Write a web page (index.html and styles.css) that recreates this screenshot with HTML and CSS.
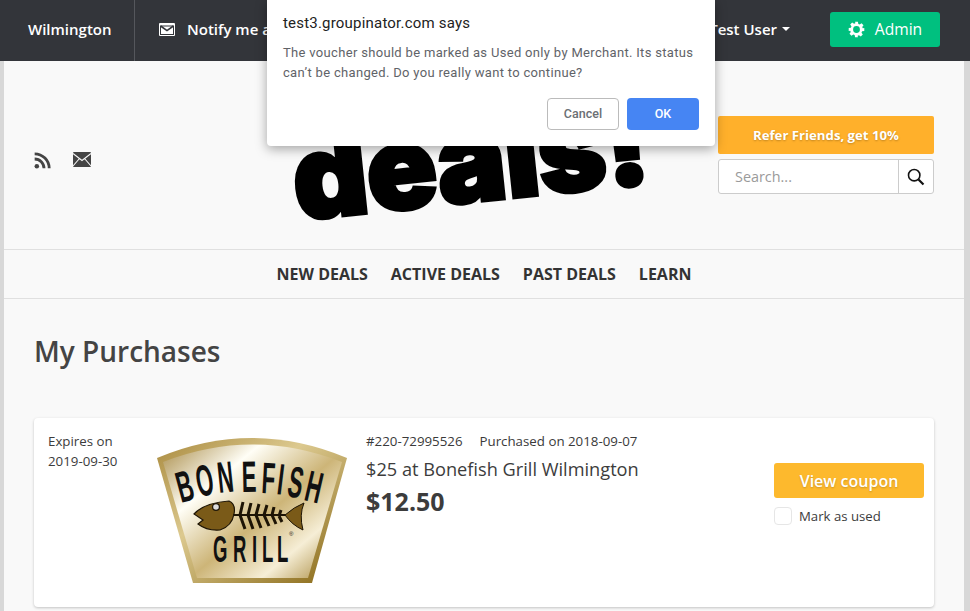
FILE: index.html
```html
<!DOCTYPE html>
<html lang="en">
<head>
<meta charset="utf-8">
<title>My Purchases</title>
<link rel="stylesheet" href="styles.css">
</head>
<body>
<div class="topbar">
  <div class="city">Wilmington</div>
  <div class="notify">
    <svg class="notify-icon" viewBox="0 0 16 13"><rect width="16" height="13" rx="1" fill="#fff"/><path d="M1.6 3 8 7.6 14.4 3" fill="none" stroke="#33353a" stroke-width="1.6"/><rect x="1.5" y="3" width="13" height="8.5" fill="none" stroke="#33353a" stroke-width="1"/></svg>
    <span>Notify me about deals</span>
  </div>
  <div class="user">Test User<i class="caret"></i></div>
  <button class="admin">
    <svg class="gear" viewBox="0 0 24 24"><path fill="#fff" fill-rule="evenodd" d="M10 1h4l.6 3.1 1.9.8 2.6-1.8 2.8 2.8-1.8 2.6.8 1.9L23 10v4l-3.1.6-.8 1.9 1.8 2.6-2.8 2.8-2.6-1.8-1.9.8L14 23h-4l-.6-3.1-1.9-.8-2.6 1.8-2.8-2.8 1.8-2.6-.8-1.9L1 14v-4l3.1-.6.8-1.9-1.8-2.6 2.8-2.8 2.6 1.8 1.9-.8zM12 7.2a4.8 4.8 0 1 0 0 9.6 4.8 4.8 0 0 0 0-9.6z"/></svg>
    <span class="admin-label">Admin</span>
  </button>
</div>

<div class="page">
  <header class="masthead">
    <div class="social">
      <svg class="rss" viewBox="0 0 18 18"><circle cx="3" cy="15" r="2.4" fill="#444"/><path d="M.7 7.4a9.9 9.9 0 0 1 9.9 9.9M.7 1.9a15.4 15.4 0 0 1 15.4 15.4" fill="none" stroke="#444" stroke-width="3"/></svg>
      <svg class="mail" viewBox="0 0 18 15"><rect width="18" height="15" rx="1" fill="#444"/><path d="M0 1.5 9 8.5 18 1.5M0 14l6.5-7.5M18 14l-6.5-7.5" fill="none" stroke="#f9f9f9" stroke-width="1.1"/></svg>
    </div>
    <div class="logo"><span class="logo-text">deals!</span></div>
    <div class="tools">
      <a class="refer">Refer Friends, get 10%</a>
      <div class="search">
        <span class="search-input">Search...</span>
        <span class="search-btn">
          <svg viewBox="0 0 18 18"><circle cx="7.2" cy="7.2" r="5.7" fill="none" stroke="#111" stroke-width="1.6"/><path d="M11.5 11.5 16.5 16.5" stroke="#111" stroke-width="2.2"/></svg>
        </span>
      </div>
    </div>
  </header>

  <nav class="mainnav">
    <a>NEW DEALS</a><a>ACTIVE DEALS</a><a>PAST DEALS</a><a>LEARN</a>
  </nav>

  <main class="content">
    <h1>My Purchases</h1>
    <article class="card">
      <div class="expires">Expires on<br>2019-09-30</div>
      <svg class="brand" viewBox="0 0 190 146">
        <defs>
          <linearGradient id="gold" x1="0" y1="0" x2="1" y2=".9">
            <stop offset="0" stop-color="#a98c48"/><stop offset=".3" stop-color="#fffef6"/><stop offset=".58" stop-color="#cdb578"/><stop offset=".8" stop-color="#f6eed6"/><stop offset="1" stop-color="#b1954f"/>
          </linearGradient>
          <linearGradient id="rim" x1="0" y1="0" x2="1" y2="1">
            <stop offset="0" stop-color="#a98a3e"/><stop offset=".4" stop-color="#dcc98f"/><stop offset="1" stop-color="#866613"/>
          </linearGradient>
        </defs>
        <path d="M0 21Q95-19 190 21L155 146H36Z" fill="url(#rim)"/>
        <path d="M6 25Q95-10 185 25L151 141H40Z" fill="url(#gold)"/>
        <g class="brand-big">
          <text transform="translate(24 66) rotate(-15) scale(.5 1)">B</text>
          <text transform="translate(42 60) rotate(-11) scale(.5 1)">O</text>
          <text transform="translate(62 56) rotate(-6) scale(.5 1)">N</text>
          <text transform="translate(85 55) rotate(-1) scale(.5 1)">E</text>
          <text transform="translate(104 56) rotate(3) scale(.5 1)">F</text>
          <text transform="translate(119 57) rotate(7) scale(.5 1)">I</text>
          <text transform="translate(129 59) rotate(10) scale(.5 1)">S</text>
          <text transform="translate(146 63) rotate(13) scale(.5 1)">H</text>
        </g>
        <g class="brand-small">
          <text transform="translate(56 125) scale(.5 1)">G</text>
          <text transform="translate(76 125) scale(.5 1)">R</text>
          <text transform="translate(95 125) scale(.5 1)">I</text>
          <text transform="translate(105 125) scale(.5 1)">L</text>
          <text transform="translate(120 125) scale(.5 1)">L</text>
        </g>
        <path d="M37 77Q47 66 72 64Q79 67 77 77Q75 89 63 93Q50 94 41 87L46 83Z" fill="#7a5a18" stroke="#1d1405" stroke-width="1.2"/>
        <circle cx="59" cy="70" r="3.4" fill="#ddd" stroke="#1d1405" stroke-width="1.2"/>
        <path d="M76 78H131" stroke="#1d1405" stroke-width="2"/>
        <path d="M83 78 86 65M83 78 88 92M91 78 94 66M91 78 96 92M99 78 102 67M99 78 104 91M107 78 110 68M107 78 112 89M115 78 117 70M115 78 119 87M122 79 124 73M122 79 125 85" stroke="#1d1405" stroke-width="3" fill="none"/>
        <path d="M128 78Q137 70 147 66Q142 78 146 93Q135 88 128 78Z" fill="#7a5a18" stroke="#1d1405" stroke-width="1"/>
        <text class="brand-r" x="132" y="99">®</text>
      </svg>
      <div class="deal">
        <div class="meta"><span>#220-72995526</span><span>Purchased on 2018-09-07</span></div>
        <div class="deal-title">$25 at Bonefish Grill Wilmington</div>
        <div class="price">$12.50</div>
      </div>
      <div class="actions">
        <button class="coupon">View coupon</button>
        <label class="used"><i class="check"></i>Mark as used</label>
      </div>
    </article>
  </main>
</div>

<div class="dialog" role="dialog">
  <div class="dialog-title">test3.groupinator.com says</div>
  <p class="dialog-text">The voucher should be marked as Used only by Merchant. Its status can’t be changed. Do you really want to continue?</p>
  <div class="dialog-actions">
    <button class="btn-cancel">Cancel</button>
    <button class="btn-ok">OK</button>
  </div>
</div>
</body>
</html>
```

FILE: styles.css
```css
* { box-sizing: border-box; }
html, body { margin: 0; height: 611px; overflow: hidden; }
body { background: #d8d8d8; font-family: "Open Sans", sans-serif; color: #3a3a3a; position: relative; }
button { font-family: inherit; border: 0; padding: 0; }

.topbar { height: 61px; background: #33353a; color: #fff; display: flex; align-items: center; font-size: 15px; font-weight: 600; padding: 0 30px 4px 0; }
.city { width: 135px; height: 61px; margin-bottom: -4px; padding-left: 28px; line-height: 59px; border-right: 1px solid #55575c; }
.notify { display: flex; align-items: center; padding-left: 24px; white-space: nowrap; }
.notify-icon { width: 16px; height: 13px; margin: 2px 12px 0 0; }
.user { margin-left: auto; margin-right: 40px; display: flex; align-items: center; }
.caret { width: 0; height: 0; border: 4px solid transparent; border-top-color: #fff; border-bottom: 0; margin-left: 5px; }
.admin { width: 110px; height: 35px; margin-bottom: -2px; background: #00c07f; color: #fff; font-size: 15.6px; font-weight: 400; border-radius: 3px; display: flex; align-items: center; justify-content: center; gap: 10px; }
.admin-label { margin-bottom: 2px; }
.gear { width: 17px; height: 17px; }

.page { margin: 0 6px 0 4px; background: #f9f9f9; height: 550px; overflow: hidden; }
.masthead { height: 189px; border-bottom: 1px solid #e0e0e0; display: flex; padding: 0 30px 0 30px; }
.social { width: 259px; padding-top: 91px; display: flex; gap: 22px; align-items: flex-start; }
.rss { width: 17px; height: 17px; }
.mail { width: 18px; height: 15px; }
.logo { width: 352px; position: relative; }
.logo-text { position: absolute; left: 7px; top: 47px; font-family: "Inter", sans-serif; font-weight: 900; font-size: 116px; line-height: 140px; color: #000; letter-spacing: -1px; -webkit-text-stroke: 4px #000; transform: rotate(-6deg); transform-origin: left bottom; }
.tools { width: 216px; margin-left: auto; padding-top: 55px; }
.refer { display: block; height: 38px; line-height: 38px; background: #ffb02b; color: #fff; text-align: center; font-size: 13.2px; font-weight: 700; border-radius: 2px; text-shadow: 0 1px 2px rgba(0,0,0,.25); }
.search { display: flex; height: 35px; margin-top: 5px; background: #fff; border: 1px solid #ccc; border-radius: 3px; }
.search-input { flex: 1; padding-left: 16px; line-height: 33px; font-size: 14.4px; color: #9a9a9a; }
.search-btn { width: 35px; border-left: 1px solid #ccc; display: flex; align-items: center; justify-content: center; }
.search-btn svg { width: 18px; height: 18px; }

.mainnav { height: 49px; border-bottom: 1px solid #e0e0e0; display: flex; justify-content: center; align-items: center; gap: 23px; font-size: 16px; font-weight: 700; color: #333; }

.content { padding: 0 30px; }
h1 { margin: 0; padding-top: 32px; height: 119px; font-size: 28px; line-height: 40px; font-weight: 600; color: #444; }
.card { display: flex; height: 189px; background: #fff; border-radius: 4px; box-shadow: 0 1px 3px rgba(0,0,0,.22); padding: 13px 10px 0 14px; font-size: 13.3px; line-height: 20px; }
.expires { width: 109px; color: #3c3c3c; }
.brand { width: 190px; height: 146px; margin-top: 6px; flex: none; }
.brand-big text { font-family: "Liberation Sans", sans-serif; font-weight: 700; font-size: 44px; fill: #111; }
.brand-small text { font-family: "Liberation Sans", sans-serif; font-weight: 700; font-size: 37px; fill: #111; }
.brand-r { font-family: "Liberation Sans", sans-serif; font-size: 6px; fill: #111; }
.deal { flex: 1; margin-left: 19px; }
.meta { display: flex; gap: 17px; }
.deal-title { font-size: 18.2px; line-height: 26px; margin-top: 5px; color: #3c3c3c; }
.price { font-size: 25px; line-height: 34px; font-weight: 700; margin-top: 2px; color: #3c3c3c; }
.actions { width: 150px; padding-top: 32px; }
.coupon { display: block; width: 150px; height: 35px; background: #fdb92d; color: #fff; font-size: 16px; font-weight: 600; border-radius: 3px; text-shadow: 0 1px 2px rgba(0,0,0,.2); }
.used { display: flex; align-items: center; margin-top: 8px; font-size: 13.2px; color: #3c3c3c; }
.check { width: 18px; height: 18px; border: 1px solid #e6e6e6; border-radius: 4px; margin-right: 7px; }

.dialog { position: absolute; left: 267px; top: 0; width: 448px; height: 146px; background: #fff; border-radius: 0 0 4px 4px; box-shadow: 0 3px 12px rgba(0,0,0,.35); padding: 14px 16px 0; font-family: "Roboto", sans-serif; }
.dialog-title { font-size: 15px; line-height: 18px; color: #222; letter-spacing: .2px; }
.dialog-text { margin: 11px 0 0; font-size: 13px; line-height: 20px; color: #5f6368; letter-spacing: .32px; }
.dialog-actions { display: flex; justify-content: flex-end; gap: 8px; margin-top: 15px; }
.dialog-actions button { width: 72px; height: 32px; padding-bottom: 1px; border-radius: 4px; font-family: inherit; font-size: 12.5px; font-weight: 500; }
.btn-cancel { background: #fff; border: 1px solid #bbb; color: #6b6f74; }
.btn-ok { background: #4685f3; color: #fff; }
```
